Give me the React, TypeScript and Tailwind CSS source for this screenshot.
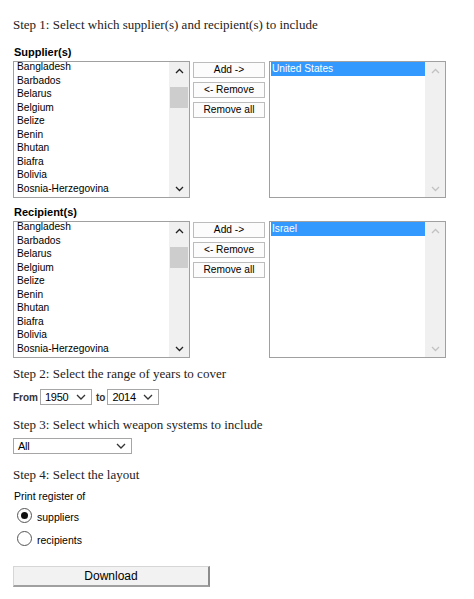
import React from 'react';

const countries = [
  'Bangladesh',
  'Barbados',
  'Belarus',
  'Belgium',
  'Belize',
  'Benin',
  'Bhutan',
  'Biafra',
  'Bolivia',
  'Bosnia-Herzegovina',
  'Botswana',
];

const sans = "font-['Liberation_Sans',Arial,sans-serif]";
const serif = "font-['Liberation_Serif','Times_New_Roman',serif]";

function Chevron({ up, color = '#222' }: { up?: boolean; color?: string }) {
  return (
    <svg width="9" height="6" viewBox="0 0 9 6" fill="none">
      <path
        d={up ? 'M1 5L4.5 1.5L8 5' : 'M1 1L4.5 4.5L8 1'}
        stroke={color}
        strokeWidth="1.3"
      />
    </svg>
  );
}

function SourceList() {
  return (
    <div className="flex w-[177px] h-[137px] border border-[#a0a0a0] bg-white overflow-hidden">
      <div className="flex-1 overflow-hidden">
        <div className="-mt-[2px]">
          {countries.map((c) => (
            <div key={c} className="h-[13.5px] leading-[13.5px] pl-[3px] text-[10.2px] text-black whitespace-nowrap">
              {c}
            </div>
          ))}
        </div>
      </div>
      <div className="w-[20px] bg-[#f0f0f0] flex flex-col justify-between">
        <div>
          <div className="h-[17px] flex items-center justify-center">
            <Chevron up />
          </div>
          <div className="mt-[8px] mx-[1px] h-[21px] bg-[#cdcdcd]" />
        </div>
        <div className="h-[17px] flex items-center justify-center">
          <Chevron />
        </div>
      </div>
    </div>
  );
}

function TargetList({ selected }: { selected: string }) {
  return (
    <div className="flex w-[177px] h-[137px] border border-[#a0a0a0] bg-white overflow-hidden">
      <div className="flex-1 pl-[1px]">
        <div className="h-[13.5px] leading-[13.5px] pl-[1px] text-[10.2px] bg-[#3399ff] text-white">{selected}</div>
      </div>
      <div className="w-[20px] bg-[#f0f0f0] flex flex-col justify-between">
        <div className="h-[17px] flex items-center justify-center">
          <Chevron up color="#c2c2c2" />
        </div>
        <div className="h-[17px] flex items-center justify-center">
          <Chevron color="#c2c2c2" />
        </div>
      </div>
    </div>
  );
}

function MoveButtons() {
  return (
    <div className="w-[72px] pt-[1px] flex flex-col gap-[4px]">
      {['Add ->', '<- Remove', 'Remove all'].map((b) => (
        <button
          key={b}
          className="h-[16px] border border-[#bcbcbc] bg-[#fcfcfc] text-[10.2px] leading-[14px] text-black"
        >
          {b}
        </button>
      ))}
    </div>
  );
}

function Picker({ label, selected }: { label: string; selected: string }) {
  return (
    <>
      <div className="h-[12px] leading-[12px] text-[11px] font-bold pl-[1px]">{label}</div>
      <div className="mt-[3px] flex">
        <SourceList />
        <div className="ml-[3px]">
          <MoveButtons />
        </div>
        <div className="ml-[4px]">
          <TargetList selected={selected} />
        </div>
      </div>
    </>
  );
}

function Dropdown({ value, width }: { value: string; width: string }) {
  return (
    <div className={`${width} h-[16px] border border-[#a6a6a6] bg-white flex items-center justify-between pl-[4px] pr-[5px]`}>
      <span className="text-[11px] leading-[14px] tracking-[-0.3px]">{value}</span>
      <svg width="10" height="6" viewBox="0 0 10 6" fill="none">
        <path d="M1 1L5 5L9 1" stroke="#333" strokeWidth="1.3" />
      </svg>
    </div>
  );
}

function Radio({ checked, label }: { checked?: boolean; label: string }) {
  return (
    <div className="h-[16px] flex items-center pl-[4px]">
      <div className="w-[15px] h-[15px] rounded-full border border-[#555] bg-white flex items-center justify-center">
        {checked && <div className="w-[7px] h-[7px] rounded-full bg-[#111]" />}
      </div>
      <span className="ml-[5px] text-[10.5px] leading-[12px] mt-[3px]">{label}</span>
    </div>
  );
}

export default function App() {
  return (
    <div className={`w-[474px] h-[599px] bg-white pl-[13px] pt-[17px] text-black ${sans}`}>
      <div className={`h-[16px] leading-[16px] text-[13px] text-[#222] ${serif}`}>
        Step 1: Select which supplier(s) and recipient(s) to include
      </div>

      <div className="mt-[13px]">
        <Picker label="Supplier(s)" selected="United States" />
      </div>
      <div className="mt-[8px]">
        <Picker label="Recipient(s)" selected="Israel" />
      </div>

      <div className={`mt-[8px] h-[16px] leading-[16px] text-[13px] text-[#222] ${serif}`}>
        Step 2: Select the range of years to cover
      </div>
      <div className="mt-[7px] flex items-center">
        <span className="text-[10px] font-bold text-[#333]">From</span>
        <div className="ml-[2px]">
          <Dropdown value="1950" width="w-[52px]" />
        </div>
        <span className="ml-[4px] text-[10px] font-bold text-[#333]">to</span>
        <div className="ml-[2px]">
          <Dropdown value="2014" width="w-[52px]" />
        </div>
      </div>

      <div className={`mt-[12px] h-[16px] leading-[16px] text-[13px] text-[#222] ${serif}`}>
        Step 3: Select which weapon systems to include
      </div>
      <div className="mt-[5px]">
        <Dropdown value="All" width="w-[119px]" />
      </div>

      <div className={`mt-[13px] h-[16px] leading-[16px] text-[13px] text-[#222] ${serif}`}>
        Step 4: Select the layout
      </div>
      <div className="mt-[7px] h-[12px] leading-[12px] text-[10.5px] pl-[1px]">Print register of</div>
      <div className="mt-[5px]">
        <Radio checked label="suppliers" />
      </div>
      <div className="mt-[7px]">
        <Radio label="recipients" />
      </div>

      <button className="mt-[20px] block w-[197px] h-[21px] bg-[#f2f2f2] border-t border-l border-[#d6d6d6] border-r-2 border-b-2 border-r-[#8c8c8c] border-b-[#a0a0a0] text-[12px] leading-[18px] text-black">
        Download
      </button>
    </div>
  );
}
